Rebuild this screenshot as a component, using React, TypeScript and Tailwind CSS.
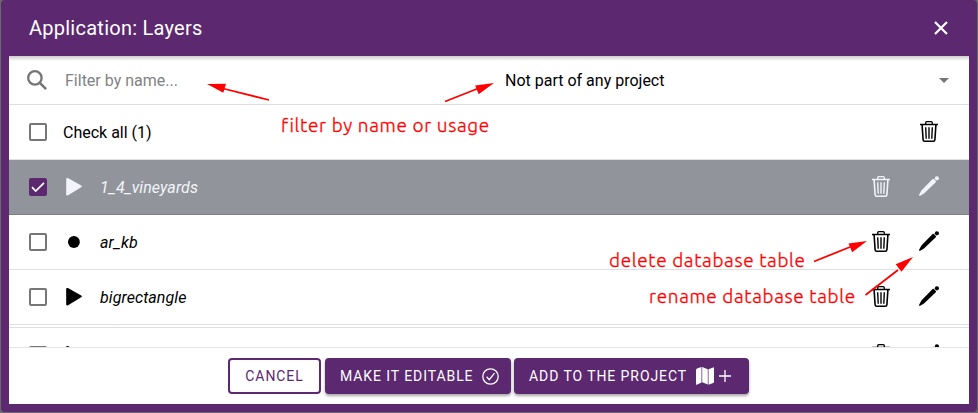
import React from "react";

function Trash() {
  return (
    <svg className="mb-px h-[21px] w-[18px] shrink-0" viewBox="0 0 18 21" fill="none" stroke="currentColor">
      <path d="M0 3.500h18" strokeWidth="1.500" />
      <path d="M5.700 3.300V1.700q0-1 1-1h4.600q1 0 1 1v1.600" strokeWidth="1.300" />
      <path d="M2.100 4l1 14.700q.1 1.500 1.600 1.500h8.600q1.500 0 1.600-1.500L15.900 4" strokeWidth="1.600" />
      <path d="M5.700 6.300l.5 11.400M9 6.300v11.400M12.300 6.300l-.5 11.400" strokeWidth="1.400" />
    </svg>
  );
}

function Pencil() {
  return (
    <svg className="mb-0.5 h-5 w-5 shrink-0" viewBox="0 0 20 20" fill="currentColor">
      <path d="M13.600 3q.7-.6 1.300 0l1.900 1.900q.5.7 0 1.300L5 17.500 1.200 19.700Q-.2 20.100.1 18.700L2.400 14.600z" />
      <circle cx="17.900" cy="2.300" r="2.100" />
    </svg>
  );
}

function Checkbox({ checked = false }: { checked?: boolean }) {
  return checked ? (
    <span className="flex size-[18px] shrink-0 items-center justify-center rounded-[2px] bg-[#5c2870]">
      <svg className="size-[18px]" viewBox="0 0 18 18" fill="none" stroke="white" strokeWidth="1.700">
        <path d="M3 9.200l3.700 3.900 8.300-8.300" />
      </svg>
    </span>
  ) : (
    <span className="size-[18px] shrink-0 rounded-[2px] border-2 border-[#767676] bg-white" />
  );
}

function LayerSymbol({ kind }: { kind: "point" | "polygon" }) {
  return (
    <svg className="ml-[17px] h-[18px] w-5 shrink-0" viewBox="0 0 20 18" fill="currentColor">
      {kind === "point" ? (
        <circle cx="9.900" cy="9" r="5.900" />
      ) : (
        <path d="M4.400.2l12.800 7.400q1.200.9 0 1.700L4.100 17.200q-1.900.7-1.900-1V1.100Q2.400-.8 4.400.2z" />
      )}
    </svg>
  );
}

interface RowProps {
  name?: string;
  kind: "point" | "polygon";
  selected?: boolean;
}

function LayerRow({ name, kind, selected = false }: RowProps) {
  return (
    <div
      className={`flex h-[55px] shrink-0 items-center border-b pr-[30px] pl-5 ${
        selected ? "border-[#7b7e87] bg-[#91949b] text-[#f3f4f9]" : "border-[#e0e0e3] text-black"
      }`}
    >
      <Checkbox checked={selected} />
      <LayerSymbol kind={kind} />
      <span className="ml-4 flex-1 pt-0.5 text-base tracking-[0.08px] italic">{name}</span>
      <Trash />
      <span className="ml-[29px] flex">
        <Pencil />
      </span>
    </div>
  );
}

function Note({ className, children }: { className: string; children: React.ReactNode }) {
  return (
    <span
      className={`absolute font-['Ubuntu','Noto_Sans',sans-serif] text-[19px] leading-6 font-light tracking-[0.650px] whitespace-nowrap text-[#ff0000] [-webkit-text-stroke:0.3px_#ff0000] ${className}`}
    >
      {children}
    </span>
  );
}

export default function App() {
  return (
    <div className="relative h-[413px] w-[978px] overflow-hidden bg-[#68696a] font-[Roboto,sans-serif] text-base">
      <div className="mx-px flex h-[412px] flex-col rounded-[4px] bg-[#5c2870] px-2 pb-2">
        <header className="flex h-14 shrink-0 items-center justify-between pr-[21px] pl-5 text-xl tracking-[0.25px] text-white">
          <h1>Application: Layers</h1>
          <svg className="size-[14px]" viewBox="0 0 14 14" fill="none" stroke="white" strokeWidth="2.200">
            <path d="M1 1l12 12M13 1L1 13" />
          </svg>
        </header>
        <main className="flex h-[292px] shrink-0 flex-col overflow-hidden border-b border-[#e5e5e5] bg-white">
          <div className="flex h-[49px] shrink-0 items-center border-b border-[#e0dce6] bg-linear-to-b from-[#cccccc] to-white to-[5px] pr-5 pl-[18px]">
            <svg className="size-5" viewBox="0 0 20 20" fill="none" stroke="#757575">
              <circle cx="7.900" cy="7.900" r="6.700" strokeWidth="2.300" />
              <path d="M12.600 12.600l6.500 6.500" strokeWidth="2.500" />
            </svg>
            <span className="ml-[18px] w-[440px] pt-0.5 text-[#828282]">Filter by name...</span>
            <span className="flex-1 pt-0.5 text-black">Not part of any project</span>
            <svg className="h-[5px] w-[10px]" viewBox="0 0 10 5" fill="#757575">
              <path d="M0 0h10L5 5z" />
            </svg>
          </div>
          <div className="flex h-[55px] shrink-0 items-center justify-between border-b border-[#e0e0e3] pr-[31px] pl-5 text-black">
            <div className="flex items-center gap-4">
              <Checkbox />
              <span className="pt-0.5">Check all (1)</span>
            </div>
            <Trash />
          </div>
          <LayerRow name="1_4_vineyards" kind="polygon" selected />
          <LayerRow name="ar_kb" kind="point" />
          <LayerRow name="bigrectangle" kind="polygon" />
          <div className="h-[3px] shrink-0 border-b border-[#e0dce6]" />
          <LayerRow kind="polygon" />
        </main>
        <footer className="flex h-14 shrink-0 items-center bg-white pl-[219px] text-sm tracking-[0.920px] text-white">
          <button className="h-9 w-[93px] rounded-[4px] border-2 border-[#5c2870] text-[#5c2870]">CANCEL</button>
          <button className="ml-1 flex h-9 w-[186px] items-center rounded-[4px] bg-[#5c2870] pl-[15px] shadow-[0_2px_3px_rgba(0,0,0,0.35)]">
            <span className="w-[142px] text-left">MAKE IT EDITABLE</span>
            <svg className="size-[17px]" viewBox="0 0 17 17" fill="none" stroke="white" strokeWidth="1.300">
              <circle cx="8.500" cy="8.500" r="7.700" />
              <path d="M4.600 8.800l2.700 2.900 5.200-6.500" />
            </svg>
          </button>
          <button className="ml-[3px] flex h-9 w-[235px] items-center rounded-[4px] bg-[#5c2870] pl-[15px] shadow-[0_2px_3px_rgba(0,0,0,0.35)]">
            <span className="w-[167px] text-left">ADD TO THE PROJECT</span>
            <svg className="h-[18px] w-[18px]" viewBox="0 0 18 18" fill="white">
              <path d="M0 3q0-1 1-1.500L5.500 0v15.400L.8 17.700Q0 18 0 17zM6.200 0l5.600 2.300v15.300L6.200 15.200zM12.500 2.300L17.200.4q.8-.3.8.6v13.700q0 .8-.8 1.200l-4.700 1.900z" />
            </svg>
            <svg className="ml-[5px] size-3" viewBox="0 0 12 12" stroke="white" strokeWidth="1.300">
              <path d="M6 0v12M0 6h12" />
            </svg>
          </button>
        </footer>
      </div>

      <Note className="top-[113px] left-[281px]">filter by name or usage</Note>
      <Note className="top-[248px] left-[609px]">delete database table</Note>
      <Note className="top-[284px] left-[649px]">rename database table</Note>
      <svg className="pointer-events-none absolute inset-0 h-[413px] w-[978px]" stroke="#ff0000" strokeWidth="1.800" fill="#ff0000">
        <path d="M269 100L223 88.500M445 101.500L478 88.500M814 261.500L850 247M865.500 295L898 270" />
        <path stroke="none" d="M207 84l19-.3-2.700 9zM494 83l-15.300 11.300-3.500-8.800zM867 241l-14.800 11.300-3.700-8.700zM913 257l-11.500 14.700-5.800-7.400z" />
      </svg>
    </div>
  );
}
